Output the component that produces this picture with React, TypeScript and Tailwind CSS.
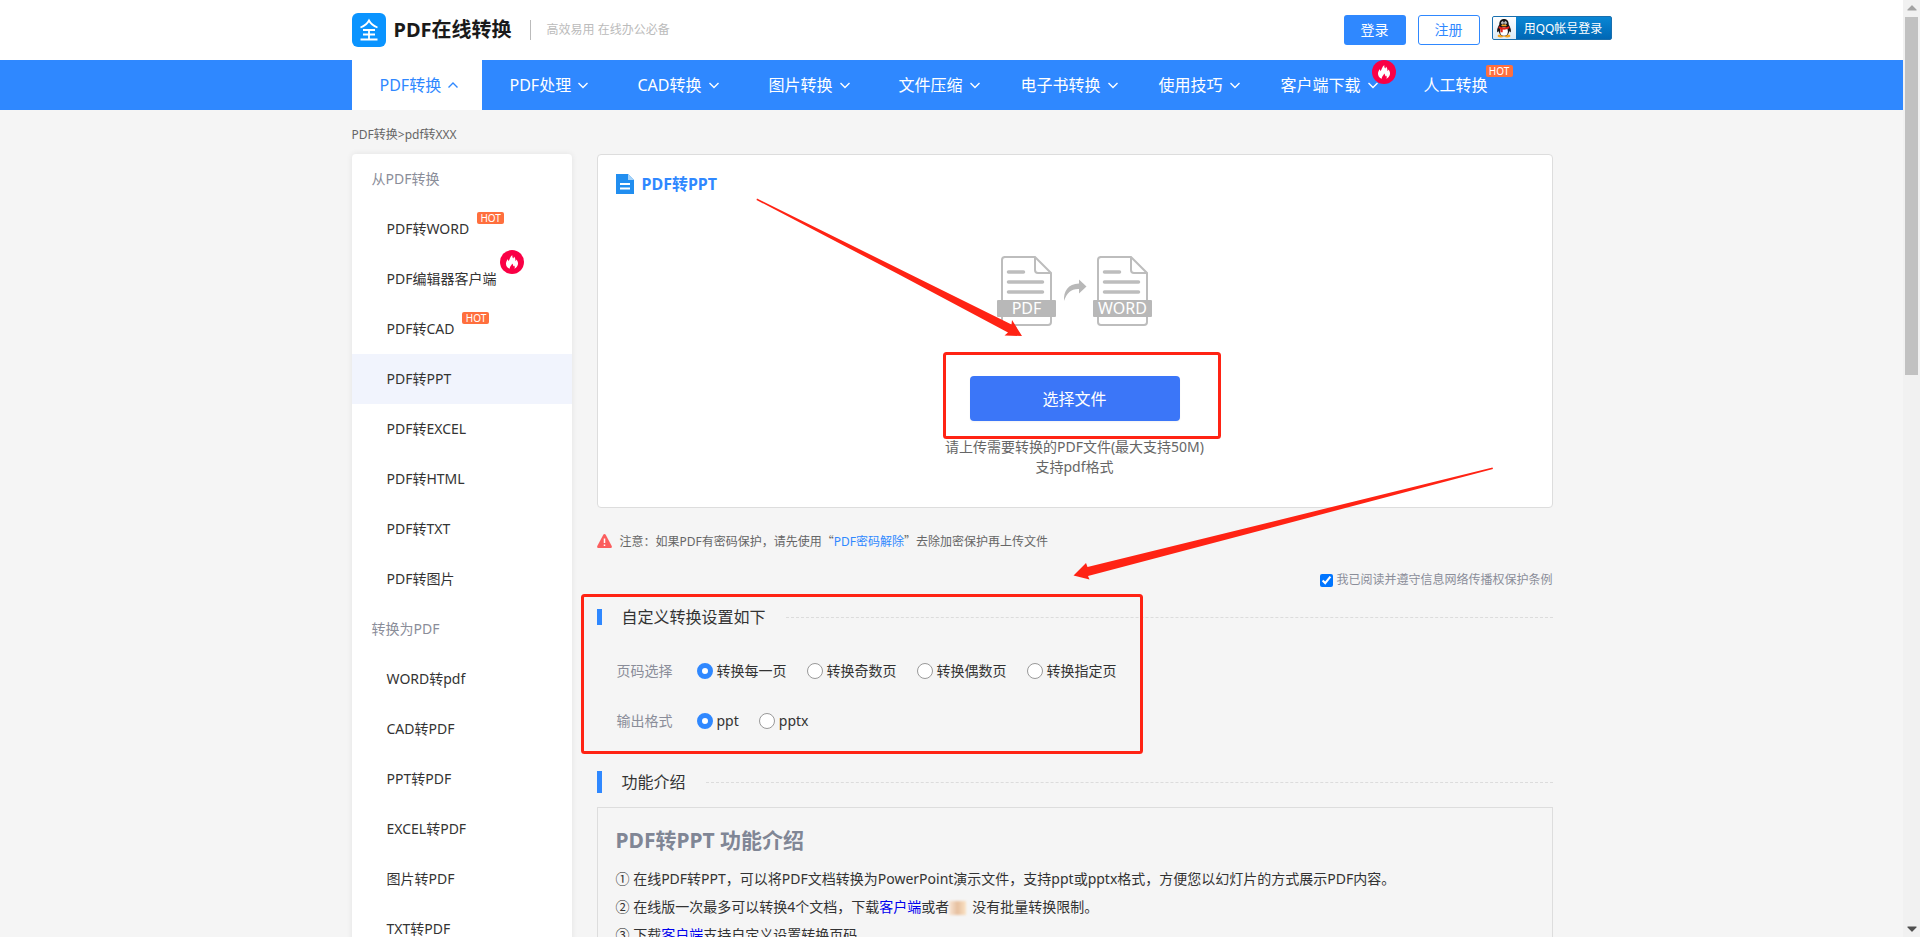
import { useState } from "react";
import { FaCaretDown } from "react-icons/fa";

type Badge = "hot" | "fire";

const navItems: { label: string; width: string; badge?: Badge }[] = [
  { label: "PDF处理", width: "w-32" },
  { label: "CAD转换", width: "w-[131px]" },
  { label: "图片转换", width: "w-[130px]" },
  { label: "文件压缩", width: "w-[122px]" },
  { label: "电子书转换", width: "w-[138px]" },
  { label: "使用技巧", width: "w-[122px]" },
  { label: "客户端下载", width: "w-[143px]", badge: "fire" },
];

const sideGroups: { title: string; items: { label: string; badge?: Badge }[] }[] = [
  {
    title: "从PDF转换",
    items: [
      { label: "PDF转WORD", badge: "hot" },
      { label: "PDF编辑器客户端", badge: "fire" },
      { label: "PDF转CAD", badge: "hot" },
      { label: "PDF转PPT" },
      { label: "PDF转EXCEL" },
      { label: "PDF转HTML" },
      { label: "PDF转TXT" },
      { label: "PDF转图片" },
    ],
  },
  {
    title: "转换为PDF",
    items: [
      { label: "WORD转pdf" },
      { label: "CAD转PDF" },
      { label: "PPT转PDF" },
      { label: "EXCEL转PDF" },
      { label: "图片转PDF" },
      { label: "TXT转PDF" },
    ],
  },
];

const pageOptions = ["转换每一页", "转换奇数页", "转换偶数页", "转换指定页"];
const formatOptions = ["ppt", "pptx"];

const Chevron = ({ up = false }: { up?: boolean }) => (
  <svg className="h-3 w-3 shrink-0" viewBox="0 0 12 12" fill="none" stroke="currentColor" strokeWidth="1.4">
    <path d={up ? "M1.5 8.5 6 4l4.5 4.5" : "M1.5 4 6 8.5 10.5 4"} />
  </svg>
);

const Hot = () => (
  <span className="block h-3 w-[27px] rounded-xs bg-[#ff6f3d] text-center text-[10px] leading-3 text-white">
    HOT
  </span>
);

const Fire = () => (
  <svg className="block h-6 w-6" viewBox="0 0 24 24">
    <circle cx="12" cy="12" r="12" fill="#fa0045" />
    <path
      d="M9.800 18.800C7.400 17.800 5.800 15.900 6 13.200c.1-1.500 1-2.200 1.200-4 .9.500 1.300 1.200 1.400 2C9.800 9.500 9.800 6.900 12.300 5c-.2 1.600.2 2.600.9 3.500.5-.5.700-1 .7-2 1.400 1.400 1.700 2.900 1.500 4.500.6-.3.900-.8 1-1.500 1.400 1.700 1.900 3.300 1.500 5-.4 2-1.700 3.300-3.600 4.200.8-1.300.6-2.300-.3-3.200-.2.500-.4.700-.8.900.1-1.300-.3-2.200-1.200-2.900 0 1.200-.8 1.800-1.500 2.700-.6.800-.8 1.600-.7 2.600z"
      fill="#fff"
    />
  </svg>
);

const Penguin = () => (
  <svg className="h-5 w-4" viewBox="0 0 16 20">
    <ellipse cx="4.800" cy="18" rx="3.200" ry="1.400" fill="#f7a51c" />
    <ellipse cx="11.200" cy="18" rx="3.200" ry="1.400" fill="#f7a51c" />
    <path d="M8 1C4.900 1 3.200 3.200 3.300 6.500 2 8.700.6 11.500 1.200 14c.4.600 1.200-.3 1.500-1 .5 3.300 2.500 5 5.300 5s4.800-1.700 5.300-5c.3.700 1.100 1.600 1.500 1 .6-2.500-.8-5.300-2.100-7.500C12.800 3.200 11.100 1 8 1z" fill="#151515" />
    <ellipse cx="8" cy="13.500" rx="3.900" ry="4.200" fill="#fff" />
    <ellipse cx="6.500" cy="4.800" rx="1.200" ry="1.600" fill="#fff" />
    <ellipse cx="9.500" cy="4.800" rx="1.200" ry="1.600" fill="#fff" />
    <circle cx="6.800" cy="5" r=".6" fill="#151515" />
    <circle cx="9.200" cy="5" r=".6" fill="#151515" />
    <ellipse cx="8" cy="7.400" rx="2.800" ry=".9" fill="#f7a51c" />
    <path d="M3 8.300c3.200 1.700 6.800 1.700 10 0l.6 1.800c-2.600 1.500-5 1.700-6.900 1.500v2.700H4.400V11l-2-1z" fill="#e2231a" />
  </svg>
);

const Doc = ({ x, name }: { x: number; name: string }) => (
  <g transform={`translate(${x} 0)`}>
    <path
      d="M7 1h31l16 16v49a3 3 0 0 1-3 3H8a3 3 0 0 1-3-3V4a3 3 0 0 1 3-3z"
      fill="#fff"
      stroke="#bdbdbd"
      strokeWidth="2"
    />
    <path d="M38 1v13a3 3 0 0 0 3 3h13" fill="none" stroke="#bdbdbd" strokeWidth="2" />
    <path d="M11.500 16h15M11.500 26h34M11.500 36h34" stroke="#bdbdbd" strokeWidth="3.500" strokeLinecap="round" />
    <rect y="44" width="59" height="17" rx="1" fill="#b8b8b8" />
    <text x="29.500" y="58" textAnchor="middle" fontSize="16" fill="#fff">
      {name}
    </text>
  </g>
);

const SectionTitle = ({ text, bar }: { text: string; bar: string }) => (
  <div className="flex h-[22px] items-center">
    <span className={`w-[5px] bg-[#2f88ff] ${bar}`} />
    <h2 className="ml-5 text-base leading-[22px] text-[#333]">{text}</h2>
    <span className="ml-5 flex-1 border-t border-dashed border-[#dcdcdc]" />
  </div>
);

type RadioRowProps = {
  title: string;
  name: string;
  options: string[];
  value: string;
  onChange: (v: string) => void;
};

const RadioRow = ({ title, name, options, value, onChange }: RadioRowProps) => (
  <div
    role="radiogroup"
    aria-labelledby={`${name}-title`}
    className="flex h-[50px] items-center gap-5 pl-5 text-sm text-[#333]"
  >
    <span id={`${name}-title`} className="mr-1 text-[#8a8d99]">
      {title}
    </span>
    {options.map((o) => (
      <label key={o} className="flex items-center gap-1">
        <input
          type="radio"
          name={name}
          value={o}
          checked={value === o}
          onChange={() => onChange(o)}
          className="h-4 w-4 appearance-none rounded-full border border-[#999] bg-white checked:border-5 checked:border-[#2f88ff]"
        />
        {o}
      </label>
    ))}
  </div>
);

const Header = () => (
  <header className="bg-white">
    <div className="mx-auto flex h-[60px] w-[1200px] items-center">
      <a href="#" className="flex items-center gap-2">
        <svg className="h-[34px] w-[34px]" viewBox="0 0 34 34">
          <rect width="34" height="34" rx="6" fill="#0a94ff" />
          <path
            d="M8.500 14.500C12.500 13 15.500 10.500 17 7.500c1.500 3 4.500 5.500 8.500 7M11 17h12M11 21.500h12M8.500 26.500h17M17 17v9.500"
            fill="none"
            stroke="#fff"
            strokeWidth="1.800"
          />
        </svg>
        <span className="text-xl font-bold text-[#1a1a1a]">PDF在线转换</span>
      </a>
      <span className="ml-[18px] h-5 w-px bg-[#bbb]" />
      <span className="ml-4 text-xs text-[#bbb]">高效易用 在线办公必备</span>
      <div className="-mr-[60px] ml-auto flex items-start gap-3">
        <button className="h-[30px] w-[62px] rounded-[3px] bg-[#2f88ff] text-sm text-white">登录</button>
        <button className="h-[30px] w-[62px] rounded-[3px] border border-[#2f88ff] text-sm text-[#2f88ff]">
          注册
        </button>
        <button className="mt-px flex h-6 w-[120px] overflow-hidden rounded-xs border border-[#1a6fae] bg-linear-to-b from-[#0a86d4] to-[#0067b5] text-xs text-white">
          <span className="flex h-full w-[23px] items-center justify-center bg-linear-to-b from-white to-[#dceaf5]">
            <Penguin />
          </span>
          <span className="flex-1 leading-6">用QQ帐号登录</span>
        </button>
      </div>
    </div>
  </header>
);

const Nav = () => (
  <nav className="bg-[#2f88ff] text-base text-white">
    <div className="mx-auto flex h-[50px] w-[1200px]">
      <a href="#" className="flex w-[130px] items-center gap-1.5 bg-white pl-7 text-[#2f88ff]">
        PDF转换
        <Chevron up />
      </a>
      {navItems.map((item) => (
        <a
          key={item.label}
          href="#"
          className={`relative flex items-center gap-1.5 pl-7 whitespace-nowrap ${item.width}`}
        >
          {item.label}
          <Chevron />
          {item.badge && (
            <span className="absolute top-0 right-0">
              <Fire />
            </span>
          )}
        </a>
      ))}
      <a href="#" className="relative flex items-center pl-7 whitespace-nowrap">
        人工转换
        <span className="absolute top-[5px] left-full -ml-0.5">
          <Hot />
        </span>
      </a>
    </div>
  </nav>
);

const Sidebar = () => (
  <aside className="w-[220px] shrink-0 rounded bg-white text-sm leading-[50px] shadow-[0_0_6px_rgba(0,0,0,0.08)]">
    {sideGroups.map((group) => (
      <div key={group.title}>
        <h3 className="pl-5 text-[#8a8d99]">{group.title}</h3>
        <ul>
          {group.items.map((item) => (
            <li key={item.label} className={item.label === "PDF转PPT" ? "bg-[#f1f4fd]" : ""}>
              <a href="#" className="relative ml-[35px] inline-block h-[50px] align-top text-[#333]">
                {item.label}
                {item.badge === "hot" && (
                  <span className="absolute top-2 left-full ml-2">
                    <Hot />
                  </span>
                )}
                {item.badge === "fire" && (
                  <span className="absolute -top-1 left-full ml-1">
                    <Fire />
                  </span>
                )}
              </a>
            </li>
          ))}
        </ul>
      </div>
    ))}
  </aside>
);

// red frames and arrows drawn over the main column
const Marks = () => (
  <svg
    className="pointer-events-none absolute top-0 left-0 h-[610px] w-[955px] overflow-visible"
    viewBox="0 0 955 610"
    fill="#ff2314"
  >
    <path d="M160 44.500 414.500 170.500 415 166 425 182 407.500 181.500 411 178.500 303 121 159.500 46z" />
    <path d="M895.500 313.500 490.500 413 489 409 476.500 421.500 492.500 425.500 491 422 896 315z" />
    <rect x="347.500" y="199.500" width="275" height="84" rx="2" fill="none" stroke="#ff2314" strokeWidth="3" />
    <rect x="-14.500" y="441.500" width="559" height="157" rx="2" fill="none" stroke="#ff2314" strokeWidth="3" />
  </svg>
);

const App = () => {
  const [page, setPage] = useState(pageOptions[0]);
  const [format, setFormat] = useState(formatOptions[0]);
  const [agree, setAgree] = useState(true);

  return (
    <div
      lang="zh-CN"
      className="flex h-screen overflow-hidden bg-[#f5f5f5] font-['Noto_Sans','Noto_Sans_CJK_SC',sans-serif]"
    >
      <div className="min-w-0 flex-1">
        <Header />
        <Nav />
        <div className="mx-auto w-[1200px]">
          <div className="flex h-11 items-center pt-1.5 text-xs text-[#666]">
            <a href="#">PDF转换</a>&gt;<a href="#">pdf转XXX</a>
          </div>
          <div className="-mr-px flex items-start gap-[25px]">
            <Sidebar />
            <main className="relative min-w-0 flex-1">
              <section className="flex flex-col items-center rounded border border-[#ddd] bg-white px-[18px] pt-[19px] pb-[30px]">
                <div className="flex h-5 items-center gap-2 self-start">
                  <svg className="h-5 w-[18px]" viewBox="0 0 18 20">
                    <path d="M0 0h12l6 6v14H0z" fill="#218ef0" />
                    <path d="M12 0l6 6h-6z" fill="#a6d3fa" />
                    <path d="M4 10h10M4 14.500h10" stroke="#fff" strokeWidth="2" />
                  </svg>
                  <h1 className="text-base font-bold text-[#2f88ff]">PDF转PPT</h1>
                </div>
                <svg className="mt-[62px] h-[70px] w-[155px]" viewBox="0 0 155 70">
                  <Doc x={0} name="PDF" />
                  <path d="M67 45c-.5-10 4-17 15-17.500V23.500l7.500 7-7.500 7v-4.500c-8-.3-12 4-15 12z" fill="#b8b8b8" />
                  <Doc x={96} name="WORD" />
                </svg>
                <button className="mt-[50px] h-[45px] w-[210px] rounded bg-[#3b76f8] text-base text-white shadow-xs">
                  选择文件
                </button>
                <p className="mt-4 text-center text-sm leading-5 text-[#666]">
                  请上传需要转换的PDF文件(最大支持50M)
                  <br />
                  支持pdf格式
                </p>
              </section>

              <div className="mt-[23px] flex h-5 items-center gap-2 text-xs text-[#666]">
                <svg className="h-[14px] w-[15px]" viewBox="0 0 15 14">
                  <path d="M7.500 0c.5 0 .9.300 1.200.7l6 11.300c.5 1-.1 2-1.200 2h-12C.4 14-.2 13 .3 12l6-11.300C6.600.3 7 0 7.500 0z" fill="#fb5e5e" />
                  <path d="M7.500 4.500v4.500M7.500 10.500v1.500" stroke="#fff" strokeWidth="1.500" />
                </svg>
                <p>
                  注意：如果PDF有密码保护，请先使用
                  <a href="#" className="text-[#2f88ff]">
                    <span className="font-['Noto_Sans_CJK_SC',sans-serif] text-[#666]">“</span>
                    PDF密码解除
                    <span className="font-['Noto_Sans_CJK_SC',sans-serif] text-[#666]">”</span>
                  </a>
                  去除加密保护再上传文件
                </p>
              </div>

              <label className="mt-[19px] flex h-5 items-center justify-end gap-[3px] text-xs text-[#8a8d99]">
                <input
                  type="checkbox"
                  checked={agree}
                  onChange={(e) => setAgree(e.target.checked)}
                  className="h-[13px] w-[13px]"
                />
                我已阅读并遵守信息网络传播权保护条例
              </label>

              <div className="mt-4">
                <SectionTitle text="自定义转换设置如下" bar="h-4" />
              </div>
              <div className="mt-[18px]">
                <RadioRow title="页码选择" name="page" options={pageOptions} value={page} onChange={setPage} />
                <RadioRow title="输出格式" name="format" options={formatOptions} value={format} onChange={setFormat} />
              </div>

              <div className="mt-[25px]">
                <SectionTitle text="功能介绍" bar="h-[22px]" />
              </div>
              <section className="mt-[14px] border border-[#ddd] px-[18px] pt-[17px] pb-5 text-sm leading-7 text-[#333]">
                <h2 className="mb-[10px] text-[21px] leading-[30px] font-bold text-[#808695]">PDF转PPT 功能介绍</h2>
                <p>① 在线PDF转PPT，可以将PDF文档转换为PowerPoint演示文件，支持ppt或pptx格式，方便您以幻灯片的方式展示PDF内容。</p>
                <p>
                  ② 在线版一次最多可以转换4个文档，下载
                  <a href="#" className="text-[#0000ee]">客户端</a>或者
                  <span className="mr-1.5 inline-block h-[14px] w-[17px] bg-linear-to-r from-[#f8e6d6] via-[#e6bf9f] to-[#fbe3c4] align-middle blur-[1px]" />
                  没有批量转换限制。
                </p>
                <p>
                  ③ 下载<a href="#" className="text-[#0000ee]">客户端</a>支持自定义设置转换页码
                </p>
              </section>
              <Marks />
            </main>
          </div>
        </div>
      </div>

      <div className="flex w-[17px] shrink-0 flex-col items-center bg-[#f1f1f1] text-[#505050]">
        <FaCaretDown className="h-[17px] w-2.5 rotate-180 text-[#a3a3a3]" />
        <div className="h-[358px] w-[13px] bg-[#c1c1c1]" />
        <FaCaretDown className="mt-auto h-[17px] w-2.5" />
      </div>
    </div>
  );
};

export default App;
